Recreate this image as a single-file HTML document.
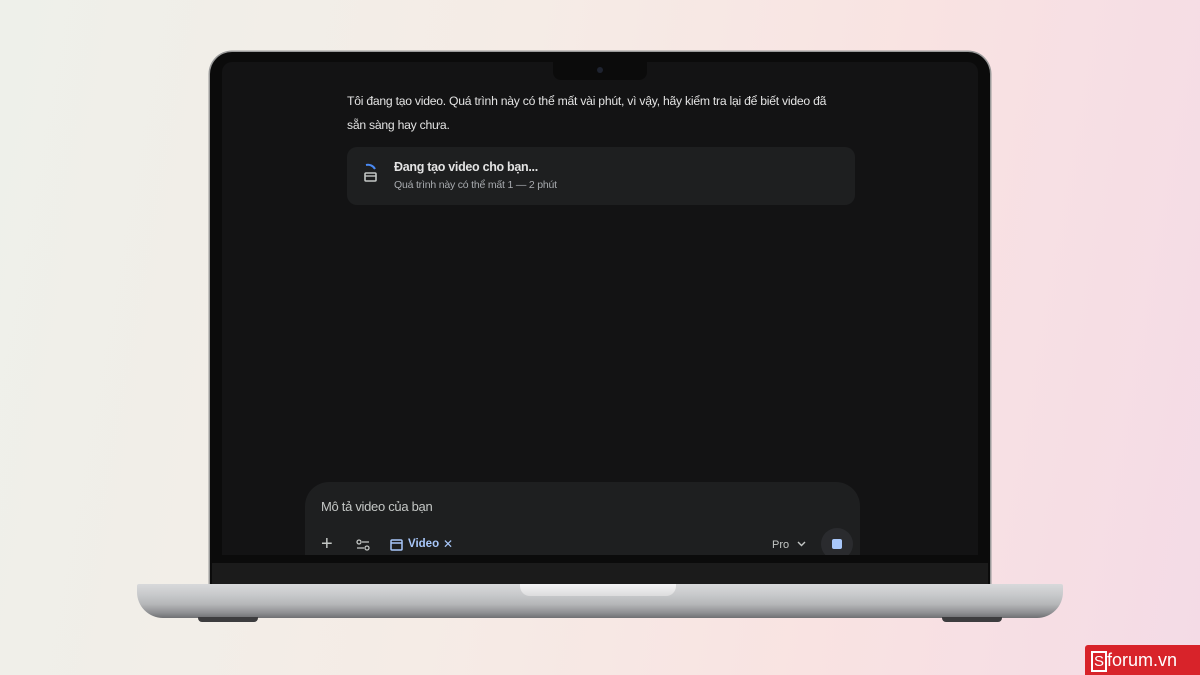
<!DOCTYPE html>
<html><head><meta charset="utf-8"><style>
*{margin:0;padding:0;box-sizing:border-box}
body{width:1200px;height:675px;overflow:hidden;position:relative;font-family:"Liberation Sans",sans-serif;
background:linear-gradient(100deg,#eef0ea 0%,#f5ece6 40%,#f9e3e2 70%,#f4dbe6 100%);}
.lid{position:absolute;left:210px;top:52px;width:780px;height:534px;background:#0b0b0b;border-radius:22px 22px 0 0;box-shadow:0 0 0 1.5px #9a9a9a}
.screen{position:absolute;left:222px;top:62px;width:756px;height:493px;background:#131314;border-radius:10px 10px 0 0;overflow:hidden}
.chin{position:absolute;left:212px;top:563px;width:776px;height:22px;background:#1b1b1b}
.notch{position:absolute;left:553px;top:62px;width:94px;height:18px;background:#0b0b0b;border-radius:0 0 8px 8px}
.cam{position:absolute;left:597px;top:67px;width:6px;height:6px;border-radius:50%;background:#1e2330}
.base{position:absolute;left:137px;top:584px;width:926px;height:34px;border-radius:2px 2px 26px 26px;
background:linear-gradient(#d8d9db 0%,#c9cacc 30%,#b5b6b8 60%,#8e8f92 85%,#6f7073 100%)}
.lip{position:absolute;left:520px;top:584px;width:156px;height:12px;background:linear-gradient(#f4f4f5,#dcdcdd);border-radius:0 0 10px 10px}
.foot{position:absolute;top:617px;width:60px;height:5px;background:#3d3d3f;border-radius:0 0 4px 4px}
.t{position:absolute;color:#e3e3e3;font-size:12.5px;white-space:nowrap}
.card{position:absolute;left:125px;top:85px;width:508px;height:58px;background:#1e1f20;border-radius:10px}
.inp{position:absolute;left:83px;top:420px;width:555px;height:100px;background:#1e1f20;border-radius:24px}
.logo{position:absolute;left:1085px;top:645px;width:115px;height:30px;background:#d8232a;border-radius:3px 0 0 0;color:#fff;font-size:18px;line-height:30px;padding-left:6px}
</style></head><body>
<div class="lid"></div>
<div class="screen">
 <div class="t" style="left:125px;top:27px;line-height:24px;font-size:12.2px;letter-spacing:-0.25px">Tôi đang tạo video. Quá trình này có thể mất vài phút, vì vậy, hãy kiểm tra lại để biết video đã<br>sẵn sàng hay chưa.</div>
 <div class="card">
  <svg style="position:absolute;left:16px;top:16px" width="18" height="20" viewBox="0 0 18 20"><path d="M3 2 A8 8 0 0 1 12 6" stroke="#4a8af4" stroke-width="2" fill="none"/><rect x="2" y="10" width="11" height="8" rx="1" stroke="#c4c7c5" stroke-width="1.6" fill="none"/><path d="M2 13h11" stroke="#c4c7c5" stroke-width="1.4"/></svg>
  <div class="t" style="left:47px;top:13px;font-size:12.5px;color:#e3e3e3;font-weight:bold;letter-spacing:-0.3px">Đang tạo video cho bạn...</div>
  <div class="t" style="left:47px;top:32px;font-size:10.5px;color:#a8abaf;letter-spacing:-0.2px">Quá trình này có thể mất 1 — 2 phút</div>
 </div>
 <div class="inp">
  <div class="t" style="left:16px;top:17px;font-size:13px;color:#c4c7c5;letter-spacing:-0.3px">Mô tả video của bạn</div>
  <div class="t" style="left:16px;top:50px;font-size:20px;color:#c4c7c5;line-height:24px">+</div>
  <svg style="position:absolute;left:51px;top:57px" width="14" height="12" viewBox="0 0 14 12"><circle cx="3" cy="3" r="2" stroke="#c4c7c5" fill="none" stroke-width="1.3"/><path d="M6 3h7M1 9h7" stroke="#c4c7c5" stroke-width="1.3"/><circle cx="11" cy="9" r="2" stroke="#c4c7c5" fill="none" stroke-width="1.3"/></svg>
  <svg style="position:absolute;left:85px;top:57px" width="13" height="12" viewBox="0 0 13 12"><rect x="1" y="1" width="11" height="10" rx="1" stroke="#a8c7fa" stroke-width="1.5" fill="none"/><path d="M1 4h11" stroke="#a8c7fa" stroke-width="1.5"/></svg>
  <div class="t" style="left:103px;top:56px;font-size:11.5px;color:#a8c7fa;font-weight:bold">Video</div>
  <div class="t" style="left:138px;top:55px;font-size:12px;color:#a8c7fa">✕</div>
  <div class="t" style="left:467px;top:57px;font-size:11px;color:#c4c7c5">Pro</div>
  <svg style="position:absolute;left:492px;top:59px" width="9" height="6" viewBox="0 0 9 6"><path d="M1 1l3.5 3.5L8 1" stroke="#c4c7c5" stroke-width="1.4" fill="none"/></svg>
  <div style="position:absolute;left:516px;top:46px;width:32px;height:32px;border-radius:50%;background:#2a2b2e"></div>
  <div style="position:absolute;left:527px;top:57px;width:10px;height:10px;border-radius:2px;background:#a8c7fa"></div>
 </div>
</div>
<div class="notch"></div><div class="cam"></div>
<div class="chin"></div>
<div class="base"></div>
<div class="lip"></div>
<div class="foot" style="left:198px"></div><div class="foot" style="left:942px"></div>
<div class="logo"><span style="border:2px solid #fff;padding:0 1px;font-size:15px;line-height:17px;display:inline-block">S</span>forum.vn</div>
</body></html>
